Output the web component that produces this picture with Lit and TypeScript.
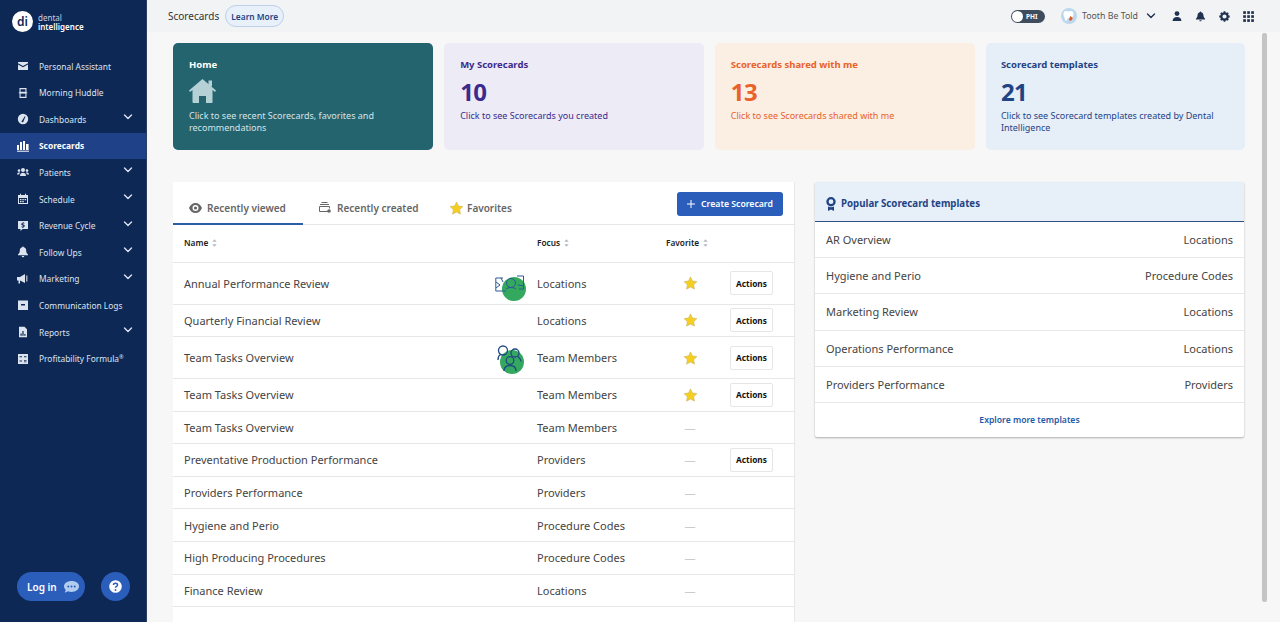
import { LitElement, html, css, svg } from "lit";
import { customElement } from "lit/decorators.js";

const chev = svg`<svg width="10" height="6" viewBox="0 0 10 6"><path d="M1.500 1l3.500 3.500L8.500 1" fill="none" stroke="currentColor" stroke-width="1.400" stroke-linecap="round" stroke-linejoin="round"/></svg>`;
const icon = (p: unknown) => html`<svg class="nicon" width="12" height="12" viewBox="0 0 12 12" fill="currentColor">${p}</svg>`;
const navIcons: Record<string, unknown> = {
  mail: svg`<path d="M1 2h10v1.200L6 6 1 3.200z"/><path d="M1 4.400 6 7.200l5-2.800V10H1z"/>`,
  huddle: svg`<path fill-rule="evenodd" d="M2.500 1h7v10h-7zM3.600 2.200v2.600h4.800V2.200zM3.600 6.400v3.400h4.800V6.400z"/><rect x="1.800" y="5.200" width="8.400" height="1"/>`,
  dash: svg`<path fill-rule="evenodd" d="M6 .8a5.200 5.200 0 1 0 0 10.400A5.200 5.200 0 0 0 6 .8zM5.200 7.400 7.800 3.200l.7.4-2 4.600a1 1 0 1 1-1.300-.8z"/>`,
  bars: svg`<rect x="0" y="5" width="2" height="5"/><rect x="3" y="2" width="2" height="8"/><rect x="6" y="1" width="2" height="9"/><rect x="9" y="4" width="2.600" height="6"/><rect x="0" y="10.700" width="12" height="1"/>`,
  people: svg`<circle cx="6" cy="4" r="2"/><circle cx="2" cy="4.600" r="1.300"/><circle cx="10" cy="4.600" r="1.300"/><path d="M3 10c0-2 1.200-3.200 3-3.200S9 8 9 10zM0 8.600C0 7 1 6.400 2 6.400c.5 0 .8.100 1 .3C2.400 7.300 2.200 8 2.100 8.600zM12 8.600C12 7 11 6.400 10 6.400c-.5 0-.8.100-1 .3.600.6.800 1.300.9 1.900z"/>`,
  cal: svg`<path fill-rule="evenodd" d="M1 2h2V.8h1V2h4V.8h1V2h2v9H1zM2 5v5h8V5z"/><path d="M3 6h1.500v1.200H3zM5.300 6h1.500v1.200H5.300zM7.600 6h1.500v1.200H7.600zM3 8h1.500v1.200H3zM5.300 8h1.500v1.200H5.300z"/>`,
  rev: svg`<path fill-rule="evenodd" d="M1 1h10v8H5.500L3.500 11V9H1zM5.500 2.400v.6c-.8.100-1.300.6-1.300 1.300 0 1.500 2.400 1 2.400 1.800 0 .3-.3.5-.8.5-.4 0-.8-.2-1.100-.4l-.4.8c.3.200.7.400 1.200.5v.6h1V7c.8-.1 1.300-.6 1.300-1.300 0-1.600-2.400-1.100-2.400-1.800 0-.3.3-.5.7-.5s.7.100 1 .3l.4-.8c-.3-.2-.6-.3-1-.4v-.6z"/>`,
  bell: svg`<path d="M6 .5c.5 0 .8.300.8.800 1.800.4 2.400 1.900 2.400 3.400 0 2.300 1.300 3.300 1.800 3.800v.8H1v-.8c.5-.5 1.800-1.500 1.800-3.800 0-1.500.6-3 2.400-3.400 0-.5.3-.8.8-.8zM4.700 10h2.600a1.300 1.300 0 0 1-2.600 0z"/>`,
  mega: svg`<path d="M0 4h3l5-3v9L3 7.500v3H1.500v-3H0z"/><path d="M9 2.500h1.500v6H9z" opacity=".7"/>`,
  log: svg`<path fill-rule="evenodd" d="M1 1.500h10V11H1zM4 5v1.500h4V5z"/>`,
  rep: svg`<path fill-rule="evenodd" d="M2 .8h5.500L10 3.300V11.200H2zM3.500 9.800h1.200V7.500H3.500zM5.400 9.800h1.200V5H5.400zM7.300 9.800h1.200V8H7.300z"/>`,
  pf: svg`<path fill-rule="evenodd" d="M1 1h10v10H1zM2.500 3.200v1h2.500v-1zM7 3.200v1h2.500v-1zM2.500 7.500v1h2.500v-1zM7 7v.8h2.500V7zM7 8.500v.8h2.500v-.8z"/>`,
};
const nav: [string, string, boolean, boolean?][] = [
  ["mail", "Personal Assistant", false],
  ["huddle", "Morning Huddle", false],
  ["dash", "Dashboards", true],
  ["bars", "Scorecards", false, true],
  ["people", "Patients", true],
  ["cal", "Schedule", true],
  ["rev", "Revenue Cycle", true],
  ["bell", "Follow Ups", true],
  ["mega", "Marketing", true],
  ["log", "Communication Logs", false],
  ["rep", "Reports", true],
  ["pf", "Profitability Formula", false],
];
type Row = { n: string; f: string; fav: "star" | "dash"; act: boolean; cls: string; art?: "loc" | "team" };
const rows: Row[] = [
  { n: "Annual Performance Review", f: "Locations", fav: "star", act: true, cls: "h42", art: "loc" },
  { n: "Quarterly Financial Review", f: "Locations", fav: "star", act: true, cls: "h33" },
  { n: "Team Tasks Overview", f: "Team Members", fav: "star", act: true, cls: "h42", art: "team" },
  { n: "Team Tasks Overview", f: "Team Members", fav: "star", act: true, cls: "h33" },
  { n: "Team Tasks Overview", f: "Team Members", fav: "dash", act: false, cls: "h33" },
  { n: "Preventative Production Performance", f: "Providers", fav: "dash", act: true, cls: "h33" },
  { n: "Providers Performance", f: "Providers", fav: "dash", act: false, cls: "h33" },
  { n: "Hygiene and Perio", f: "Procedure Codes", fav: "dash", act: false, cls: "h33" },
  { n: "High Producing Procedures", f: "Procedure Codes", fav: "dash", act: false, cls: "h33" },
  { n: "Finance Review", f: "Locations", fav: "dash", act: false, cls: "h33" },
];
const popular = [
  ["AR Overview", "Locations"],
  ["Hygiene and Perio", "Procedure Codes"],
  ["Marketing Review", "Locations"],
  ["Operations Performance", "Locations"],
  ["Providers Performance", "Providers"],
];
const sort = svg`<svg class="sort" width="5" height="8" viewBox="0 0 6 9" fill="#b4b8bd"><path d="M3 0l2.600 3H.4zM3 9 .4 6h5.200z"/></svg>`;
const star = svg`<svg width="15" height="14" viewBox="0 0 24 23"><path d="M12 1.500l3.200 6.700 7.300 1-5.300 5.100 1.300 7.300L12 18.100l-6.500 3.500 1.300-7.300L1.500 9.200l7.300-1z" fill="#f6cf1e" stroke="#c9b468" stroke-width="1"/></svg>`;
const locArt = svg`<svg class="art loc" width="32" height="30" viewBox="0 0 32 30"><circle cx="19" cy="17" r="12" fill="#35a860"/><g fill="none" stroke="#2a5a94" stroke-width="1"><path d="M8 6H.8v13h10M22 4h6.500v13H24"/><path d="M1 10l4 3-4 3M6 6l2 4"/><circle cx="16" cy="11" r="4.500"/><path d="M11 17c2-2 8-2 10 0M23 13l5 1"/></g></svg>`;
const teamArt = svg`<svg class="art team" width="28" height="30" viewBox="0 0 28 30"><circle cx="15" cy="17" r="12" fill="#35a860"/><g fill="none" stroke="#1f4a80" stroke-width="1.300"><circle cx="6" cy="5.500" r="4.500"/><path d="M1 15c0-2.500.7-4.500 2.500-5.500"/><circle cx="18" cy="8" r="4"/><path d="M21 11.500c1.500 1.500 3 3 3 5"/><circle cx="13" cy="15.500" r="3.800"/><path d="M7 26c0-3.500 2.500-5.500 6-5.500s6 2 6 5.500"/></g></svg>`;

@customElement("app-root")
export class AppRoot extends LitElement {
  static styles = css`
    :host { display: flex; width: 1280px; height: 622px; overflow: hidden; font-family: "Noto Sans", "Open Sans", sans-serif; background: #f7f7f7; color: #333; }
    * { box-sizing: border-box; }
    .side { width: 147px; flex: none; background: #0e2855; border-right: 1px solid #2b3f63; color: #dfe6f1; display: flex; flex-direction: column; }
    .logo { height: 49px; padding: 10px 0 0 12px; display: flex; gap: 5px; align-items: flex-start; }
    .di { width: 21px; height: 21px; margin-top: 1px; background: #fff; color: #0e2855; border-radius: 50%; display: flex; align-items: center; justify-content: center; font-size: 12px; font-weight: 600; line-height: 1; }
    .lt { font-size: 8px; line-height: 8.500px; color: #c9d2e0; padding-top: 4px; }
    .lt b { display: block; color: #fff; font-weight: 600; }
    .menu { padding-top: 3.800px; flex: 1; }
    .item { height: 26.600px; display: flex; align-items: center; padding: 0 13px 0 17px; font-size: 8.400px; color: #dbe3ef; }
    .item.on { background: #1e4187; color: #fff; font-weight: 700; }
    .nicon { flex: none; margin-right: 10px; }
    .item .lab { flex: 1; white-space: nowrap; }
    .item sup { font-size: 5.500px; line-height: 0; vertical-align: 3px; }
    .item svg:last-child:not(.nicon) { margin-top: -4px; margin-right: 0; }
    .foot { display: flex; align-items: center; gap: 16px; padding: 0 0 21px 17px; }
    .login { width: 68px; height: 29px; border-radius: 15px; background: #2b5dbb; color: #fff; display: flex; align-items: center; gap: 6px; padding-left: 10px; font-size: 10px; font-weight: 600; }
    .help { width: 29px; height: 29px; border-radius: 50%; background: #2b5dbb; display: flex; align-items: center; justify-content: center; }
    .main { flex: 1; min-width: 0; display: flex; flex-direction: column; position: relative; }
    .top { height: 32px; flex: none; background: #f2f3f5; display: flex; align-items: center; padding: 0 26px 0 21px; }
    .ttl { font-size: 10px; color: #333; margin-right: 6px; }
    .learn { height: 22px; width: 59px; border-radius: 11px; border: 1px solid #bcd0ea; background: #e8f0fa; color: #1f4485; font-size: 8.400px; font-weight: 600; display: flex; align-items: center; justify-content: center; }
    .sp { flex: 1; }
    .tog { width: 34px; height: 13px; border-radius: 7px; background: #3e4c5e; position: relative; color: #fff; font-size: 6.500px; font-weight: 700; padding: 2px 0 0 15px; line-height: 9px; margin-right: 16px; }
    .tog i { position: absolute; left: 1px; top: 1px; width: 11px; height: 11px; border-radius: 50%; background: #fff; }
    .ava { width: 16px; height: 16px; border-radius: 50%; background: #bcd8ee; margin-right: 5px; display: flex; align-items: center; justify-content: center; }
    .prac { font-size: 8.800px; color: #555; margin-right: 8px; }
    .tic { display: flex; align-items: center; color: #20324f; }
    .tic.user { margin-left: 16px; }
    .tic.b { margin-left: 13px; }
    .tic.g { margin-left: 13px; }
    .tic.a { margin-left: 13px; }
    .content { flex: 1; padding: 11px 35px 0 26px; min-height: 0; }
    .cards { display: flex; gap: 11px; height: 107px; }
    .card { flex: 1; border-radius: 5px; padding: 15px 16px; font-size: 9px; line-height: 11.500px; }
    .card h4 { margin: 0; font-size: 9.500px; line-height: 14px; font-weight: 700; }
    .card .num { font-size: 24px; line-height: 30px; font-weight: 700; margin-top: 4.500px; letter-spacing: -0.5px; margin-bottom: 3.500px; }
    .home { background: #24646f; color: #fff; }
    .home p { color: #d5e3e6; }
    .home svg { display: block; margin: 7px 0 7px; }
    .card p { margin: 0; }
    .mine { background: #ecebf6; color: #3c2a8c; }
    .shared { background: #fbeee2; color: #e8622a; padding-left: 15.500px; }
    .tpl { background: #e6eef8; color: #1f4485; padding-left: 15px; }
    .lower { display: flex; gap: 20px; margin-top: 32px; align-items: flex-start; }
    .left { width: 622px; flex: none; background: #fff; height: 460px; border-right: 1px solid #e8e8e8; }
    .tabs { height: 43px; display: flex; align-items: stretch; border-bottom: 1px solid #e5e7ea; position: relative; }
    .tab { display: flex; align-items: center; gap: 5px; font-size: 10px; font-weight: 600; color: #666; padding-top: 9px; }
    .tab.t1 { width: 130px; padding-left: 16px; padding-top: 10px; border-bottom: 2px solid #2a5fa8; margin-bottom: -1px; }
    .tab.t2 { padding-left: 15px; width: 132px; }
    .tab.t3 { padding-left: 14px; gap: 3px; }
    .create { position: absolute; right: 11px; top: 10px; width: 106px; height: 24px; border-radius: 3px; background: #2b5dbb; color: #fff; font-size: 8.700px; font-weight: 600; display: flex; align-items: center; justify-content: center; gap: 6px; }
    .thead, .row { display: grid; grid-template-columns: 353px 129px 1fr; align-items: center; padding-left: 11px; }
    .thead { height: 38px; padding-bottom: 2px; border-bottom: 1px solid #e5e7ea; font-size: 8.300px; font-weight: 600; color: #222; }
    .thead span { display: flex; align-items: center; gap: 4px; }
    .row { border-bottom: 1px solid #e5e7ea; font-size: 11px; color: #444; }
    .h42 { height: 41.700px; }
    .h33 { height: 32.600px; }
    .name { position: relative; height: 100%; display: flex; align-items: center; }
    .art { position: absolute; top: 50%; transform: translateY(-50%); }
    .art.loc { right: 10px; margin-top: 4px; }
    .art.team { right: 12px; margin-top: 2px; }
    .favc { display: flex; align-items: center; }
    .fv { width: 48px; display: flex; justify-content: center; color: #ccc; }
    .act { margin-left: 16px; width: 43px; height: 24px; border: 1px solid #e6e6e6; border-radius: 2px; font-size: 8.300px; font-weight: 700; color: #111; display: flex; align-items: center; justify-content: center; background: #fff; }
    .right { width: 429px; flex: none; background: #fff; box-shadow: 0 1px 2px rgba(0, 0, 0, 0.3); border-radius: 2px; }
    .rh { height: 39.500px; padding-top: 5px; background: #e7eff8; border-bottom: 1px solid #2c4f85; display: flex; align-items: center; padding-left: 11px; gap: 5px; color: #1f4485; font-size: 9.700px; font-weight: 700; }
    .rr { height: 36.400px; display: flex; justify-content: space-between; align-items: center; padding: 0 11px; font-size: 11px; color: #444; border-bottom: 1px solid #e8e8e8; }
    .more { height: 34px; display: flex; align-items: center; justify-content: center; color: #1f5aa8; font-size: 8.600px; font-weight: 600; }
    .bar { position: absolute; left: 1115px; top: 33px; width: 5px; height: 569px; background: #c4c4c4; border-radius: 2px; }
  `;
  render() {
    return html`
      <aside class="side">
        <div class="logo"><div class="di">di</div><div class="lt">dental<b>intelligence</b></div></div>
        <div class="menu">
          ${nav.map(([i, l, c, on]) => html`<div class="item ${on ? "on" : ""}">${icon(navIcons[i])}<span class="lab">${l}${i === "pf" ? html`<sup>®</sup>` : ""}</span>${c ? chev : ""}</div>`)}
        </div>
        <div class="foot">
          <div class="login">Log in
            <svg width="17" height="14" viewBox="0 0 17 14"><path d="M8.500 1C4.200 1 1 3.300 1 6.300c0 1.300.6 2.500 1.700 3.400L1.800 12.800l3.300-1.500c1 .4 2.200.6 3.400.6 4.300 0 7.500-2.400 7.500-5.600S12.800 1 8.500 1z" fill="#b3cdf0"/><circle cx="5.300" cy="6.400" r="1" fill="#2b5dbb"/><circle cx="8.500" cy="6.400" r="1" fill="#2b5dbb"/><circle cx="11.700" cy="6.400" r="1" fill="#2b5dbb"/></svg>
          </div>
          <div class="help"><svg width="13" height="13" viewBox="0 0 13 13"><circle cx="6.500" cy="6.500" r="6.300" fill="#fff"/><path d="M4.500 5c0-1.200.9-1.800 2-1.800s2 .6 2 1.700c0 1.500-2 1.400-2 2.900" fill="none" stroke="#2b5dbb" stroke-width="1.500"/><circle cx="6.500" cy="10" r=".9" fill="#2b5dbb"/></svg></div>
        </div>
      </aside>
      <div class="main">
        <header class="top">
          <span class="ttl">Scorecards</span><span class="learn">Learn More</span>
          <span class="sp"></span>
          <div class="tog"><i></i>PHI</div>
          <div class="ava"><svg width="11" height="12" viewBox="0 0 11 12"><path d="M2.800 1c1 0 1.800.5 2.700.5S7.200 1 8.200 1c1.500 0 2.300 1.200 2.300 2.800 0 2.500-1 3.200-1.300 5-.2 1.200-.6 2.200-1.300 2.200-1 0-.9-3-2.400-3s-1.400 3-2.400 3c-.7 0-1.100-1-1.300-2.200C1.500 7 .5 6.300.5 3.800.5 2.200 1.300 1 2.800 1z" fill="#fff"/><path d="M7 6l3 2-2 3-2-1z" fill="#e0582a"/></svg></div>
          <span class="prac">Tooth Be Told</span>
          <span class="tic">${chev}</span>
          <span class="tic user"><svg width="10" height="10" viewBox="0 0 10 10" fill="currentColor"><circle cx="5" cy="2.600" r="2.400"/><path d="M.6 10c0-2.600 1.800-4 4.400-4s4.400 1.400 4.400 4z"/></svg></span>
          <span class="tic b"><svg width="11" height="11" viewBox="0 0 12 12" fill="currentColor">${navIcons.bell}</svg></span>
          <span class="tic g"><svg width="11" height="11" viewBox="0 0 11 11"><circle cx="5.500" cy="5.500" r="3.200" fill="none" stroke="currentColor" stroke-width="2.200"/><path d="M5.500.3v2M5.500 8.700v2M.3 5.500h2M8.700 5.500h2M1.800 1.800l1.400 1.400M7.800 7.800l1.400 1.400M9.200 1.800 7.800 3.200M3.200 7.800 1.800 9.200" stroke="currentColor" stroke-width="1.800"/></svg></span>
          <span class="tic a"><svg width="11" height="11" viewBox="0 0 11 11" fill="currentColor">${[0.2, 4.2, 8.2].flatMap((y) => [0.2, 4.2, 8.2].map((x) => svg`<rect x="${x}" y="${y}" width="2.700" height="2.700"/>`))}</svg></span>
        </header>
        <div class="content">
          <div class="cards">
            <div class="card home"><h4>Home</h4>
              <svg width="27" height="24" viewBox="0 0 27 24" fill="#b5d1d6"><path d="M13.500 0 27 11.500l-1 1.500-2.500-2V23c0 .6-.4 1-1 1H17v-7h-7v7H4.500c-.6 0-1-.4-1-1V11L1 13 0 11.500 13.500 0z"/><rect x="19.500" y="1.500" width="3.500" height="6"/></svg>
              <p>Click to see recent Scorecards, favorites and recommendations</p></div>
            <div class="card mine"><h4>My Scorecards</h4><div class="num">10</div><p>Click to see Scorecards you created</p></div>
            <div class="card shared"><h4>Scorecards shared with me</h4><div class="num">13</div><p>Click to see Scorecards shared with me</p></div>
            <div class="card tpl"><h4>Scorecard templates</h4><div class="num">21</div><p>Click to see Scorecard templates created by Dental Intelligence</p></div>
          </div>
          <div class="lower">
            <section class="left">
              <div class="tabs">
                <div class="tab t1"><svg width="13" height="10" viewBox="0 0 13 10"><path fill-rule="evenodd" d="M6.500 0C3.500 0 1.200 2 0 5c1.200 3 3.500 5 6.500 5S11.800 8 13 5c-1.200-3-3.500-5-6.500-5zm0 2a3 3 0 1 1 0 6 3 3 0 0 1 0-6z" fill="#666"/><circle cx="6.500" cy="5" r="1.600" fill="#666"/></svg>Recently viewed</div>
                <div class="tab t2"><svg width="14" height="12" viewBox="0 0 14 12" fill="none" stroke="#666"><path d="M3.500.5h6M2 2.500h9" /><path d="M11 9.500H1.500v-5h10V6.500"/><circle cx="11" cy="9" r="1.800" fill="#666" stroke="none"/></svg>Recently created</div>
                <div class="tab t3">${star}Favorites</div>
                <div class="create"><svg width="8" height="8" viewBox="0 0 8 8"><path d="M4 0v8M0 4h8" stroke="#fff"/></svg>Create Scorecard</div>
              </div>
              <div class="thead"><span>Name ${sort}</span><span>Focus ${sort}</span><span>Favorite ${sort}</span></div>
              ${rows.map((r) => html`<div class="row ${r.cls}">
                <div class="name">${r.n}${r.art === "loc" ? locArt : r.art === "team" ? teamArt : ""}</div>
                <div>${r.f}</div>
                <div class="favc"><span class="fv">${r.fav === "star" ? star : "—"}</span>${r.act ? html`<span class="act">Actions</span>` : ""}</div>
              </div>`)}
            </section>
            <section class="right">
              <div class="rh"><svg width="10" height="14" viewBox="0 0 10 14" fill="#1f4485"><path fill-rule="evenodd" d="M5 0a4.700 4.700 0 1 1 0 9.400A4.700 4.700 0 0 1 5 0zm0 2.300a2.400 2.400 0 1 0 0 4.800 2.400 2.400 0 0 0 0-4.800z"/><path d="M2 9.500c1.800.9 4.200.9 6 0V14l-3-1.500L2 14z"/></svg>Popular Scorecard templates</div>
              ${popular.map(([a, b]) => html`<div class="rr"><span>${a}</span><span>${b}</span></div>`)}
              <div class="more">Explore more templates</div>
            </section>
          </div>
        </div>
        <div class="bar"></div>
      </div>`;
  }
}
